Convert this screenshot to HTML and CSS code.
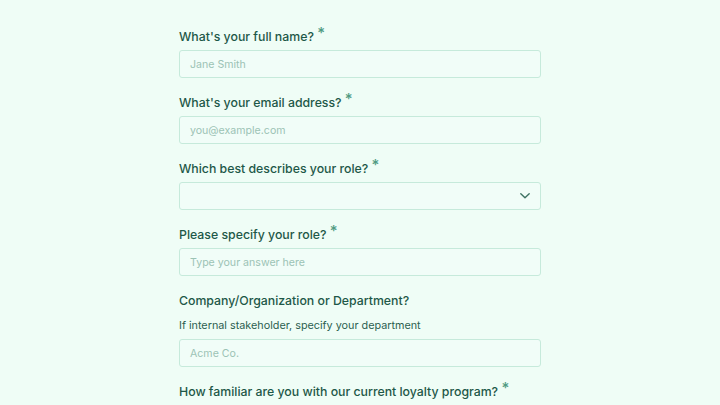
FILE: index.html
```html
<!DOCTYPE html>
<html>
<head>
<meta charset="utf-8">
<link rel="stylesheet" href="styles.css">
</head>
<body>
<form class="form">
  <div class="field">
    <label class="label">What's your full name? <span class="req">*</span></label>
    <div class="input"><span class="ph">Jane Smith</span></div>
  </div>
  <div class="field">
    <label class="label">What's your email address? <span class="req">*</span></label>
    <div class="input"><span class="ph">you@example.com</span></div>
  </div>
  <div class="field">
    <label class="label">Which best describes your role? <span class="req">*</span></label>
    <div class="input select">
      <span class="ph"></span>
      <svg class="chev" width="12" height="8" viewBox="0 0 12 8"><path d="M1.8 1.8 L6 5.8 L10.2 1.8" fill="none" stroke="#3e7262" stroke-width="1.4" stroke-linecap="round" stroke-linejoin="round"/></svg>
    </div>
  </div>
  <div class="field">
    <label class="label">Please specify your role? <span class="req">*</span></label>
    <div class="input"><span class="ph">Type your answer here</span></div>
  </div>
  <div class="field">
    <label class="label">Company/Organization or Department?</label>
    <p class="help">If internal stakeholder, specify your department</p>
    <div class="input"><span class="ph">Acme Co.</span></div>
  </div>
  <div class="field">
    <label class="label">How familiar are you with our current loyalty program? <span class="req">*</span></label>
  </div>
</form>
</body>
</html>
```
FILE: styles.css
```css
html, body {
  margin: 0;
  padding: 0;
  background: #effdf6;
  font-family: Inter, "Noto Sans", sans-serif;
  color: #1e5848;
}
.form {
  width: 362px;
  margin: 0 auto;
  padding-top: 27px;
  display: flex;
  flex-direction: column;
  gap: 15px;
}
.field {
  display: flex;
  flex-direction: column;
}
.label {
  display: block;
  height: 20px;
  font-size: 12.3px;
  line-height: 20px;
  font-weight: 500;
  color: #1e5848;
  margin-bottom: 3px;
  white-space: nowrap;
}
.req {
  color: #4f9b82;
  font-size: 15px;
  line-height: 0;
  position: relative;
  top: -3px;
}
.help {
  margin: 4px 0 5px;
  font-size: 10.8px;
  line-height: 16px;
  color: #2c5f50;
}
.input {
  box-sizing: border-box;
  height: 28px;
  border: 1px solid #c6eadb;
  border-radius: 3px;
  background: #f1fdf8;
  display: flex;
  align-items: center;
  padding: 0 10px;
  font-size: 10.6px;
}
.ph {
  color: #9cc3b5;
}
.select {
  justify-content: space-between;
  padding-right: 9px;
}
.chev {
  display: block;
}
```
